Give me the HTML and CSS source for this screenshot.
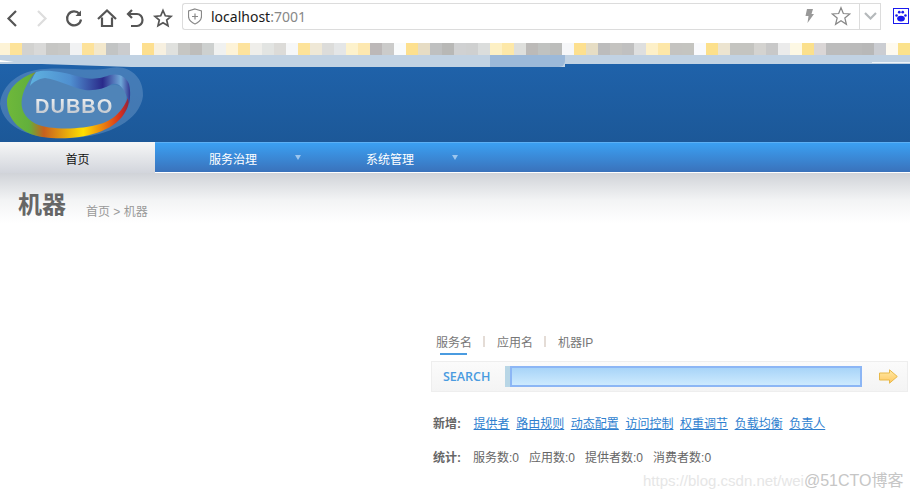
FILE: index.html
```html
<!DOCTYPE html>
<html lang="zh-CN">
<head>
  <meta charset="UTF-8">
  <title>机器</title>
  <link rel="stylesheet" href="styles.css">
</head>
<body>
  <div class="toolbar">
    <svg class="tb-icon tb-back" width="24" height="24" viewBox="0 0 24 24"><path d="M16 5 L8.5 12.5 L16 20" class="ic" /></svg>
    <svg class="tb-icon tb-forward" width="24" height="24" viewBox="0 0 24 24"><path d="M8 5 L15.5 12.5 L8 20" class="ic ic-off" /></svg>
    <svg class="tb-icon tb-reload" width="24" height="24" viewBox="0 0 24 24"><path d="M17.5 8 A7 7 0 1 0 19 13.5" class="ic" /><path d="M19 4.500 V10 H13.500 Z" class="ic-solid" /></svg>
    <svg class="tb-icon tb-home" width="24" height="24" viewBox="0 0 24 24"><path d="M3 13 L12 4.500 L21 13 M7 11.500 V20 H17 V11.500" class="ic" /></svg>
    <svg class="tb-icon tb-undo" width="24" height="24" viewBox="0 0 24 24"><path d="M9 4 L5 8 L9 12 M5 8 H14 A5.500 6 0 0 1 14 20 H8" class="ic" /></svg>
    <svg class="tb-icon tb-star" width="24" height="24" viewBox="0 0 24 24"><path d="M12 4.500 L14.300 9.800 L20 10.300 L15.700 14 L17 19.700 L12 16.700 L7 19.700 L8.300 14 L4 10.300 L9.700 9.800 Z" class="ic-thin" /></svg>
    <div class="addr">
      <svg width="14" height="17" viewBox="0 0 14 17" class="shield"><path d="M7 1 L13.500 3 V8.500 C13.500 12 10 15 7 16 C4 15 .5 12 .5 8.500 V3 Z M7 5.500 V11.500 M4 8.500 H10" fill="none" stroke="#888" stroke-width="1.200"/></svg>
      <span class="url">localhost<span class="port">:7001</span></span>
      <span class="addr-right">
        <svg width="9" height="14" viewBox="0 0 9 14"><path d="M2 0 H8 L6.500 5 H9 L2.500 14 L3.500 7 H0.500 Z" fill="#999"/></svg>
        <svg width="20" height="20" viewBox="0 0 24 24"><path d="M12 2 L14.800 9 L22.500 9.600 L16.600 14.400 L18.500 22 L12 17.800 L5.500 22 L7.400 14.400 L1.500 9.600 L9.200 9 Z" fill="none" stroke="#888" stroke-width="1.500"/></svg>
      </span>
    </div>
    <div class="drop">
      <svg width="13" height="8" viewBox="0 0 13 8"><path d="M1 1 L6.500 6.500 L12 1" fill="none" stroke="#b5b9bb" stroke-width="2.200"/></svg>
    </div>
    <div class="paw">
      <svg width="12" height="12" viewBox="0 0 14 14"><ellipse cx="7" cy="10" rx="4.500" ry="3.400" fill="#1a1aee"/><circle cx="1.800" cy="6.500" r="1.500" fill="#1a1aee"/><circle cx="5" cy="2.600" r="1.600" fill="#1a1aee"/><circle cx="9" cy="2.600" r="1.600" fill="#1a1aee"/><circle cx="12.200" cy="6.500" r="1.500" fill="#1a1aee"/></svg>
    </div>
  </div>

  <div class="mosaic" id="mosaic"></div>
  <div class="strip"><i class="strip-glint"></i><i class="strip-line"></i></div>

  <header class="banner">
    <i class="strip-tail"></i>
    <i class="strip-tab"></i>
    <svg class="logo" width="146" height="78" viewBox="0 0 146 78">
      <defs>
        <linearGradient id="ring" gradientUnits="userSpaceOnUse" x1="7" y1="0" x2="130" y2="0">
          <stop offset="0" stop-color="#6fb83a"/>
          <stop offset="0.18" stop-color="#62b03c"/>
          <stop offset="0.3" stop-color="#c8601e"/>
          <stop offset="0.62" stop-color="#ffe000"/>
          <stop offset="0.92" stop-color="#d8301c"/>
          <stop offset="1" stop-color="#8a2240"/>
        </linearGradient>
        <linearGradient id="top" gradientUnits="userSpaceOnUse" x1="30" y1="0" x2="131" y2="0">
          <stop offset="0" stop-color="#5fb2e0"/>
          <stop offset="0.4" stop-color="#4f8fd0"/>
          <stop offset="0.72" stop-color="#2a2a8a"/>
          <stop offset="0.9" stop-color="#6fa8d8"/>
          <stop offset="1" stop-color="#2c2a8a"/>
        </linearGradient>
      </defs>
      <path d="M0 40 C2 20 20 6 45 5 C70 3 90 8 110 4 C130 0 144 14 143 32 C140 56 110 72 72 74 C40 76 4 68 0 40 Z" fill="#7ea6d0" opacity="0.4"/>
      <path d="M16 38 C18 22 30 12 42 12 C60 14 80 28 100 24 C112 20 122 18 126 30 C128 46 112 62 85 65 C60 68 30 64 20 52 C17 48 16 44 16 38 Z" fill="#4f84b8"/>
      <path d="M36 8 C18 14 7 26 7 38 C7 56 22 70 42 73 C70 77 110 72 124 50 C128 44 130 38 129 30 C126 42 116 56 100 60 C80 66 50 66 36 60 C24 54 20 44 22 34 C24 24 30 14 36 8 Z" fill="url(#ring)"/>
      <path d="M36 8 C45 5 60 7 85 14 C95 16 105 13 110 11 C118 9 126 12 129 20 C131 28 130 36 129 40 C128 34 125 28 123 25 C120 20 116 19 112 20 C104 25 94 27 85 26 C72 24 60 16 45 14 C38 15 33 18 30 22 C31 17 33 12 36 8 Z" fill="url(#top)"/>
    </svg>
    <span class="logo-word">DUBBO</span>
  </header>

  <nav class="menu">
    <a class="menu-home">首页</a>
    <a class="menu-item menu-a">服务治理<i class="tri"></i></a>
    <a class="menu-item menu-b">系统管理<i class="tri"></i></a>
  </nav>

  <section class="title-bar">
    <h1>机器</h1>
    <span class="crumb">首页 &gt; 机器</span>
  </section>

  <main class="search-area">
    <div class="tabs">
      <span class="tab tab-on">服务名</span>
      <i class="sep"></i>
      <span class="tab">应用名</span>
      <i class="sep"></i>
      <span class="tab">机器IP</span>
    </div>
    <div class="search-box">
      <span class="search-label">SEARCH</span>
      <i class="search-cap"></i>
      <div class="search-input"></div>
      <svg class="go" width="19" height="15" viewBox="0 0 19 15">
        <defs><linearGradient id="arrow" x1="0" y1="0" x2="0" y2="1"><stop offset="0" stop-color="#ffeaa8"/><stop offset="1" stop-color="#ffc860"/></linearGradient></defs>
        <path d="M0.500 4 H10.500 V0.800 L18.300 7.500 L10.500 14.200 V11 H0.500 Z" fill="url(#arrow)" stroke="#e8b94a"/>
      </svg>
    </div>
    <div class="links">
      <b>新增:</b>
      <a>提供者</a><a>路由规则</a><a>动态配置</a><a>访问控制</a><a>权重调节</a><a>负载均衡</a><a>负责人</a>
    </div>
    <div class="stats">
      <b>统计:</b>
      <span>服务数:0</span><span>应用数:0</span><span>提供者数:0</span><span>消费者数:0</span>
    </div>
  </main>

  <div class="watermark">https://blog.csdn.net/wei<span class="watermark-top">@51CTO博客</span></div>
  <script>
    // blurred bookmark row, one cell per colour
    var cells = [
      '#fdf3d6','#fde39a','#d2d2d0','#d9d9d8','#c6c6c4','#c8c8c6','#f1f2f3','#fde29a','#f3e8cc','#c2c4c4',
      '#cbccce','#ffffff','#fddf8f','#f7f0e0','#e0e1de','#c6c6c3','#bebdbb','#cdd0cf','#f0f1f0','#fdf3d8',
      '#fde39e','#efeeea','#e2e4e2','#dcdbd8','#f6f7f8','#fde39a','#efe8d6','#dcdcda','#e4e6e7','#fdf2cc',
      '#fde8b0','#bcb8b8','#cbcbca','#f9fbfc','#fde08f','#e6dcc4','#bfc0c0','#b8b8b6','#d0d1d2','#cfd0d0',
      '#dbdddc','#fdf0c4','#fde8a8','#dedfdc','#bcbab8','#c0c2c0','#bcbdbb','#f6f7f9','#fde08f','#e6ddc4',
      '#bcbcbc','#c4c3c0','#c0c0c0','#dedfdf','#fdf0c8','#fde7a8','#c4c3c0','#c4c4c0','#f9fafd','#fce08c',
      '#ece4d0','#c4c4c0','#c4c4c0','#d4d3d0','#c8c8c8','#ebebeb','#fdf8e4','#fbe08c','#dad6d6','#bcbcbc',
      '#bcbcbc','#bababa','#b8b8b8','#cbcdd2','#fefaf0','#fbe28c'
    ];
    var mosaic = document.getElementById('mosaic');
    cells.forEach(function (colour) {
      var c = document.createElement('i');
      c.style.background = colour;
      mosaic.appendChild(c);
    });
  </script>
</body>
</html>
```

FILE: styles.css
```css
* {
  box-sizing: border-box;
}

body {
  margin: 0;
  width: 910px;
  height: 500px;
  overflow: hidden;
  position: relative;
  background: #fff;
  font-family: "Liberation Sans", "Noto Sans CJK SC", sans-serif;
  font-size: 12px;
  color: #666;
}

/* browser chrome */
.toolbar {
  height: 43px;
  display: flex;
  align-items: center;
  padding: 0 0 11px 0;
}

.tb-icon {
  flex: none;
  margin-top: 3px;
}

.tb-back {
  margin-left: 0;
}

.tb-forward {
  margin-left: 6px;
}

.tb-reload {
  margin-left: 8px;
}

.tb-home {
  margin-left: 9px;
}

.tb-undo {
  margin-left: 4px;
}

.tb-star {
  margin-left: 4px;
}

.ic {
  fill: none;
  stroke: #555;
  stroke-width: 2.2;
}

.ic-off {
  stroke: #ddd;
}

.ic-solid {
  fill: #555;
}

.ic-thin {
  fill: none;
  stroke: #555;
  stroke-width: 1.7;
}

.addr {
  width: 677px;
  height: 27px;
  margin-left: 7px;
  display: flex;
  align-items: center;
  border: 1px solid #dcdcdc;
  border-right: 0;
  border-radius: 3px 0 0 3px;
  padding-left: 5px;
}

.shield {
  margin-right: 9px;
}

.url {
  font-family: "Noto Sans", sans-serif;
  font-size: 14px;
  color: #1a1a1a;
}

.port {
  color: #888;
}

.addr-right {
  margin-left: auto;
  display: flex;
  align-items: center;
  gap: 17px;
  padding-right: 8px;
}

.drop {
  width: 22px;
  height: 27px;
  display: flex;
  align-items: center;
  justify-content: center;
  border: 1px solid #dcdcdc;
}

.paw {
  width: 16px;
  height: 16px;
  border: 1px solid #1a1aee;
  display: flex;
  align-items: center;
  justify-content: center;
  margin-left: 12px;
}

.mosaic {
  height: 12px;
  margin-left: -2px;
  display: flex;
}

.mosaic i {
  flex: none;
  width: 12px;
}

.strip {
  height: 9px;
  position: relative;
  background: #c1d2e3;
}

.strip-glint {
  position: absolute;
  left: 0;
  top: 5px;
  width: 14px;
  height: 2px;
  background: #fff;
  clip-path: polygon(0 0, 100% 100%, 0 100%);
}

.strip-line {
  position: absolute;
  left: 872px;
  right: 0;
  top: 7px;
  height: 1px;
  background: #eef3f8;
}

/* dubbo header */
.banner {
  height: 78px;
  position: relative;
  background: linear-gradient(#1f62aa, #1c5898);
}

.strip-tail {
  position: absolute;
  left: 42px;
  top: 0;
  width: 523px;
  height: 3px;
  background: #c1d2e3;
  clip-path: polygon(0 0, 100% 0, 100% 100%, 17% 100%);
}

.strip-tab {
  position: absolute;
  left: 490px;
  top: -9px;
  width: 75px;
  height: 12px;
  border-radius: 0 0 6px 0;
  background: #9cb9d9;
}

.logo {
  position: absolute;
  left: 0;
  top: 0;
}

.logo-word {
  position: absolute;
  left: 35px;
  top: 31px;
  font-weight: bold;
  font-size: 20px;
  line-height: 23px;
  letter-spacing: 1px;
  background: linear-gradient(#f4f6f8, #b8bec6);
  -webkit-background-clip: text;
  background-clip: text;
  color: transparent;
}

.menu {
  height: 30px;
  display: flex;
  border-top: 1px solid #5cb0f5;
  background: linear-gradient(#3ba0f2, #3a72bb);
  color: #fff;
}

.menu-home {
  width: 155px;
  height: 31px;
  margin-top: -1px;
  padding-top: 2px;
  flex: none;
  display: flex;
  align-items: center;
  justify-content: center;
  color: #111;
  background: linear-gradient(#f6f7f7, #d2d5dc);
}

.menu-item {
  flex: none;
  padding-top: 2px;
  display: flex;
  align-items: center;
}

.menu-a {
  margin-left: 54px;
  width: 157px;
}

.menu-b {
  width: 157px;
}

.tri {
  width: 0;
  height: 0;
  margin-left: 38px;
  margin-bottom: 2px;
  border: 3px solid transparent;
  border-top: 5px solid #9cc6ee;
  border-bottom: 0;
}

.title-bar {
  height: 50px;
  margin-top: 1px;
  display: flex;
  align-items: flex-start;
  padding: 20px 0 0 18px;
  background: linear-gradient(#d0d3d8, #f3f4f5 55%, #fff);
}

.title-bar h1 {
  margin: 0 20px 0 0;
  font-size: 24px;
  line-height: 24px;
  font-weight: bold;
  color: #666;
}

.crumb {
  margin-top: 12px;
  line-height: 14px;
  color: #999;
}

/* search block */
.search-area {
  margin: 110px 0 0 431px;
  width: 477px;
}

.tabs {
  height: 28px;
  display: flex;
  align-items: center;
  padding: 0 0 11px 5px;
  color: #777;
}

.tab {
  position: relative;
}

.tab-on::after {
  content: "";
  position: absolute;
  left: 4px;
  right: 5px;
  bottom: -5px;
  height: 2px;
  background: #4a9be0;
}

.sep {
  width: 2px;
  height: 11px;
  margin: 0 12px 0 11px;
  background: #e4dcd6;
}

.search-box {
  height: 31px;
  display: flex;
  align-items: center;
  padding-left: 11px;
  border: 1px solid #eee;
  background: linear-gradient(#fbfbfb, #f4f4f4);
}

.search-label {
  width: 62px;
  font-family: "Open Sans", sans-serif;
  font-weight: 600;
  font-size: 12.5px;
  color: #4a9be0;
}

.search-cap {
  width: 5px;
  height: 21px;
  background: #b8d6e6;
}

.search-input {
  width: 352px;
  height: 21px;
  border: 2px solid #8cb6f5;
  background: linear-gradient(#a8d4f8, #cdeafe);
}

.go {
  margin-left: 17px;
}

.links, .stats {
  display: flex;
  align-items: center;
  margin-left: 2px;
  height: 16px;
}

.links {
  margin-top: 22px;
  gap: 6.6px;
}

.links b {
  width: 34px;
}

.links a {
  color: #2f7fcf;
  text-decoration: underline;
}

.stats {
  margin-top: 18px;
  gap: 10px;
}

.stats b {
  width: 30px;
}

.watermark {
  position: absolute;
  left: 643px;
  top: 471px;
  font-size: 15px;
  line-height: 20px;
  white-space: nowrap;
  color: #e6e6e6;
}

.watermark-top {
  font-size: 16px;
  color: #c6c6c6;
}
```
